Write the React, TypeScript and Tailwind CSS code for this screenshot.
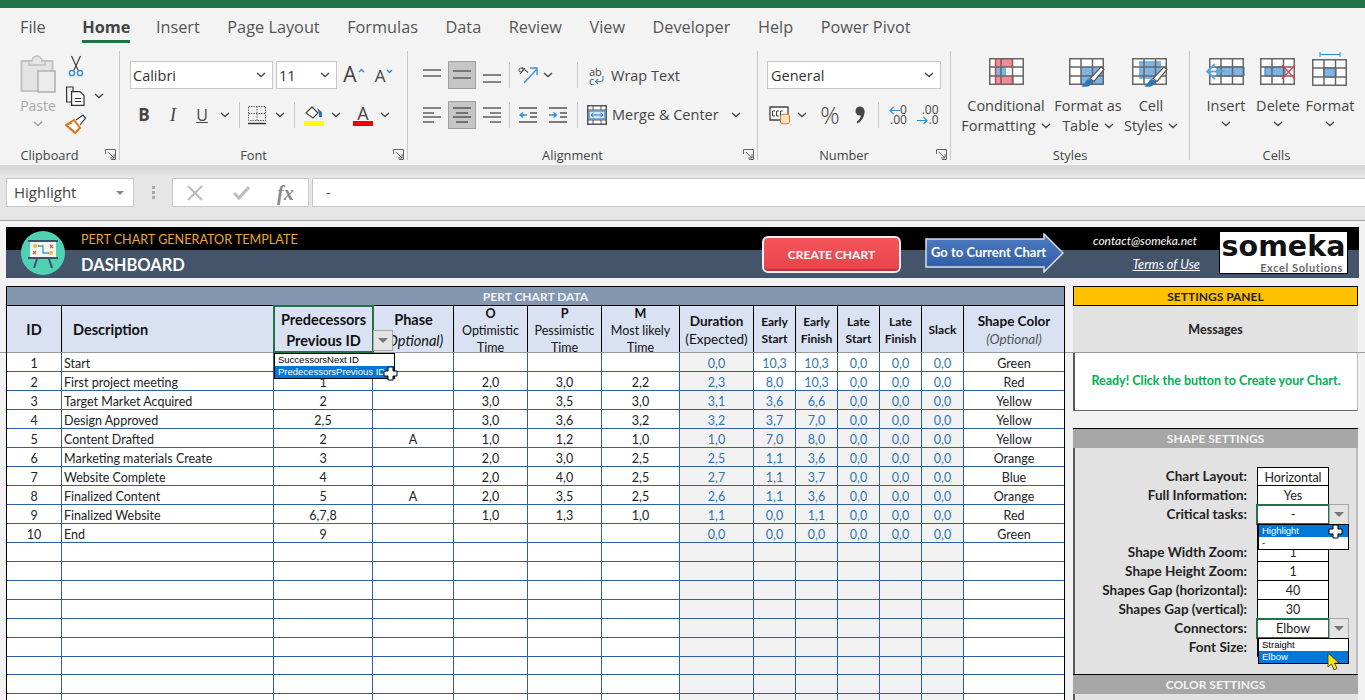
import type { ReactNode } from "react";

const TABS = ["File", "Home", "Insert", "Page Layout", "Formulas", "Data", "Review", "View", "Developer", "Help", "Power Pivot"];

type Task = {
  id: string;
  name: string;
  prev: string;
  phase: string;
  o: string;
  p: string;
  m: string;
  calc: string[];
  color: string;
};

const TASKS: Task[] = [
  { id: "1", name: "Start", prev: "", phase: "", o: "", p: "", m: "", calc: ["0,0", "10,3", "10,3", "0,0", "0,0", "0,0"], color: "Green" },
  { id: "2", name: "First project meeting", prev: "1", phase: "", o: "2,0", p: "3,0", m: "2,2", calc: ["2,3", "8,0", "10,3", "0,0", "0,0", "0,0"], color: "Red" },
  { id: "3", name: "Target Market Acquired", prev: "2", phase: "", o: "3,0", p: "3,5", m: "3,0", calc: ["3,1", "3,6", "6,6", "0,0", "0,0", "0,0"], color: "Yellow" },
  { id: "4", name: "Design Approved", prev: "2,5", phase: "", o: "3,0", p: "3,6", m: "3,2", calc: ["3,2", "3,7", "7,0", "0,0", "0,0", "0,0"], color: "Yellow" },
  { id: "5", name: "Content Drafted", prev: "2", phase: "A", o: "1,0", p: "1,2", m: "1,0", calc: ["1,0", "7,0", "8,0", "0,0", "0,0", "0,0"], color: "Yellow" },
  { id: "6", name: "Marketing materials Create", prev: "3", phase: "", o: "2,0", p: "3,0", m: "2,5", calc: ["2,5", "1,1", "3,6", "0,0", "0,0", "0,0"], color: "Orange" },
  { id: "7", name: "Website Complete", prev: "4", phase: "", o: "2,0", p: "4,0", m: "2,5", calc: ["2,7", "1,1", "3,7", "0,0", "0,0", "0,0"], color: "Blue" },
  { id: "8", name: "Finalized Content", prev: "5", phase: "A", o: "2,0", p: "3,5", m: "2,5", calc: ["2,6", "1,1", "3,6", "0,0", "0,0", "0,0"], color: "Orange" },
  { id: "9", name: "Finalized Website", prev: "6,7,8", phase: "", o: "1,0", p: "1,3", m: "1,0", calc: ["1,1", "0,0", "1,1", "0,0", "0,0", "0,0"], color: "Red" },
  { id: "10", name: "End", prev: "9", phase: "", o: "", p: "", m: "", calc: ["0,0", "0,0", "0,0", "0,0", "0,0", "0,0"], color: "Green" },
];

const EMPTY_ROWS = Array.from({ length: 9 }, (_, i) => i);
const GRID = "grid grid-cols-[55px_212px_99px_81px_74px_74px_78px_74px_42px_42px_42px_42px_42px_100px]";
const HEAD = "flex flex-col items-center justify-center border-r border-black bg-[#d9e1f2] pt-[2px] text-center text-[#111]";

function Chev({ light }: { light?: boolean }) {
  return (
    <svg width="10" height="6" viewBox="0 0 10 6" fill="none">
      <path d="M1 1l4 3.6L9 1" stroke={light ? "#9a9a9a" : "#444"} strokeWidth="1.3" />
    </svg>
  );
}

function Slot({ className, children }: { className: string; children?: ReactNode }) {
  return <div className={`flex shrink-0 items-center justify-center ${className}`}>{children}</div>;
}

function Sep() {
  return <div className="h-[26px] w-px shrink-0 bg-[#c8c8c8]" />;
}

function Launcher() {
  return (
    <svg className="absolute right-[3px] top-[-1px]" width="11" height="11" viewBox="0 0 11 11" fill="none" stroke="#666">
      <path d="M.5 5V.5h10v10H6" />
      <path d="M3 3l6 6M9 5v4H5" />
    </svg>
  );
}

function Group({ label, className, launcher, children }: { label: string; className: string; launcher?: boolean; children: ReactNode }) {
  return (
    <div className={`flex h-[109px] shrink-0 flex-col border-r border-[#c8c8c8] ${className}`}>
      <div className="h-[99px]">{children}</div>
      <div className={`relative flex h-[10px] items-center justify-center text-[12.8px] leading-[10px] text-[#444] ${launcher ? "pr-[20px]" : ""}`}>
        {label}
        {launcher && <Launcher />}
      </div>
    </div>
  );
}

function Lines({ rows, right }: { rows: [number, number][]; right?: boolean }) {
  return (
    <svg width="20" height="18" viewBox="0 0 20 18" stroke="#555" strokeWidth="1.4">
      {rows.map(([y, w]) => (
        <path key={y} d={right ? `M${19 - w} ${y}H19` : `M1 ${y}H${1 + w}`} />
      ))}
    </svg>
  );
}

function SheetGrid({ x = 1, y = 1, children }: { x?: number; y?: number; children?: ReactNode }) {
  return (
    <g transform={`translate(${x} ${y})`}>
      <rect width="35" height="27" fill="#fff" />
      {children}
      <path d="M.75.75h33.5v25.5H.75zM12 .75v25.5M23.5.75v25.5M.75 9h33.5M.75 18h33.5" fill="none" stroke="#666" strokeWidth="1.5" />
    </g>
  );
}

function Brush({ x, y }: { x: number; y: number }) {
  return (
    <g transform={`translate(${x} ${y})`}>
      <path d="M19 1l3 2.5-10 12-4-3z" fill="#fff" stroke="#555" strokeWidth="1.2" />
      <path d="M7 13c-3 .5-3.500 3.500-5 5-1 1-2 2-3 2 3 1.500 8 1 10-1.500 1-1.500 1.500-3 .8-3.700z" fill="#2e75b6" />
    </g>
  );
}

function CopyIcon() {
  return (
    <svg width="22" height="22" viewBox="0 0 22 22" fill="none" stroke="#333" strokeWidth="1.2">
      <path d="M6 17H1.600V2H8v4" />
      <path d="M6.600 6.600H15l4 4v9.800H6.600z" fill="#fff" />
      <path d="M10 13.500h6M10 16.500h6" />
    </svg>
  );
}

function PasteIcon() {
  return (
    <svg width="36" height="38" viewBox="0 0 36 38" fill="none">
      <path d="M1.500 6h31v30h-31z" fill="#e4e4e4" stroke="#c4c4c4" strokeWidth="2" />
      <path d="M12 6c0-2 2-5 5-5s5 3 5 5h3v4H9V6z" fill="#e4e4e4" stroke="#bdbdbd" strokeWidth="1.500" />
      <path d="M18 16h17v21H18z" fill="#ececec" stroke="#b0b0b0" strokeWidth="1.500" />
    </svg>
  );
}

function ScissorsIcon() {
  return (
    <svg width="16" height="22" viewBox="0 0 16 22" fill="none">
      <path d="M3.500 1l6.500 14M12.500 1L6 15" stroke="#333" strokeWidth="1.100" />
      <circle cx="4" cy="18" r="2.600" stroke="#3d8ecf" strokeWidth="1.500" />
      <circle cx="12" cy="18" r="2.600" stroke="#3d8ecf" strokeWidth="1.500" />
    </svg>
  );
}

function PainterIcon() {
  return (
    <svg width="22" height="20" viewBox="0 0 22 20" fill="none">
      <path d="M1 11l8-5 6 8-5 5z" fill="#fff" stroke="#e0761c" strokeWidth="2" />
      <path d="M11 6l7-5 2.500 3-5.500 7" fill="#fff" stroke="#333" strokeWidth="1.200" />
      <path d="M5 14l4 3M2 11l5-2" stroke="#e0761c" strokeWidth="1.200" />
    </svg>
  );
}

function Clipboard() {
  return (
    <Group label="Clipboard" className="w-[120px]" launcher>
      <div className="flex">
        <div className="ml-[18px] flex w-[40px] flex-col items-center pt-[4px]">
          <PasteIcon />
          <div className="mt-[3px] h-[20px] text-[14px] leading-[20px] text-[#a8a8a8]">Paste</div>
          <div className="mt-[5px]">
            <Chev light />
          </div>
        </div>
        <div className="ml-[5px] flex flex-col pt-[3px]">
          <Slot className="h-[24px] w-[26px]">
            <ScissorsIcon />
          </Slot>
          <div className="mt-[6px] flex items-center">
            <Slot className="h-[24px] w-[26px]">
              <CopyIcon />
            </Slot>
            <Slot className="w-[20px]">
              <Chev />
            </Slot>
          </div>
          <Slot className="mt-[4px] h-[24px] w-[26px]">
            <PainterIcon />
          </Slot>
        </div>
      </div>
    </Group>
  );
}

function Combo({ className, text }: { className: string; text: string }) {
  return (
    <div className={`flex h-[28px] shrink-0 items-center justify-between border border-[#c8c8c8] bg-white pl-[2px] pr-[6px] text-[14.5px] text-[#333] ${className}`}>
      <span className="pt-px">{text}</span>
      <Chev />
    </div>
  );
}

function SizeButton({ className, down }: { className: string; down?: boolean }) {
  return (
    <div className={`flex h-[28px] w-[24px] items-center justify-center ${down ? "pt-[2px] text-[17px]" : "text-[21px]"} text-[#444] ${className}`}>
      A
      <svg className="mb-[10px] ml-px" width="7" height="5" viewBox="0 0 7 5" fill="none" stroke="#2e8fd8" strokeWidth="1.300">
        <path d={down ? "M1 1l2.500 2.500L6 1" : "M1 4l2.500-2.500L6 4"} />
      </svg>
    </div>
  );
}

function Font() {
  return (
    <Group label="Font" className="w-[288px]" launcher>
      <div className="flex h-[38px] items-end pl-[10px]">
        <Combo className="w-[143px]" text="Calibri" />
        <Combo className="ml-[3px] w-[61px]" text="11" />
        <SizeButton className="ml-[5px]" />
        <SizeButton className="ml-[6px]" down />
      </div>
      <div className="mt-[12px] flex h-[28px] items-center pl-[10px]">
        <Slot className="w-[28px] text-[17px] font-bold text-[#444]">B</Slot>
        <Slot className="ml-px w-[28px] font-['Liberation_Serif',serif] text-[18px] italic text-[#444]">I</Slot>
        <Slot className="ml-px w-[28px] text-[16px] text-[#444] underline">U</Slot>
        <Slot className="ml-[2px] w-[14px]">
          <Chev />
        </Slot>
        <div className="ml-[7px]">
          <Sep />
        </div>
        <Slot className="ml-[3px] w-[28px]">
          <svg width="20" height="20" viewBox="0 0 20 20" fill="none" stroke="#666">
            <path d="M1.500 1.500h17v14h-17zM10 1.500v14M1.500 8.500h17" strokeDasharray="1.500 1" />
            <path d="M1 18.500h18" stroke="#333" strokeWidth="1.500" />
          </svg>
        </Slot>
        <Slot className="ml-[2px] w-[14px]">
          <Chev />
        </Slot>
        <div className="ml-[7px]">
          <Sep />
        </div>
        <Slot className="ml-[5px] w-[28px]">
          <svg width="22" height="21" viewBox="0 0 22 21" fill="none">
            <path d="M3 8l6-6 6 6-5 5z" fill="#fff" stroke="#444" strokeWidth="1.300" />
            <path d="M14 3l5 4v5h-3V8z" fill="#2e75b6" />
            <path d="M1 16h20v5H1z" fill="#ffff00" />
          </svg>
        </Slot>
        <Slot className="ml-px w-[14px]">
          <Chev />
        </Slot>
        <Slot className="ml-[6px] w-[28px]">
          <div className="flex flex-col items-center">
            <span className="text-[18px] leading-[16px] text-[#444]">A</span>
            <span className="h-[5px] w-[20px] bg-[#f00000]" />
          </div>
        </Slot>
        <Slot className="ml-px w-[14px]">
          <Chev />
        </Slot>
      </div>
    </Group>
  );
}

function Selected({ children }: { children: ReactNode }) {
  return <Slot className="h-[28px] w-[28px] border border-[#a0a0a0] bg-[#c6c6c6]">{children}</Slot>;
}

function OrientIcon() {
  return (
    <svg width="22" height="20" viewBox="0 0 22 20" fill="none">
      <path d="M7 18L20 4M13 3h7v7" stroke="#3d8ecf" strokeWidth="1.300" />
      <path d="M3 9l5-6M5 2.500l6 5" stroke="#555" strokeWidth="1.100" />
      <circle cx="4" cy="5" r="2" stroke="#555" />
    </svg>
  );
}

function IndentIcon({ inc }: { inc?: boolean }) {
  return (
    <svg width="20" height="18" viewBox="0 0 20 18" fill="none">
      <path d="M1 2h18M12 7h7M12 11h7M1 16h18" stroke="#555" strokeWidth="1.400" />
      <path d={inc ? "M1 9h7M5.500 6.500L8.500 9l-3 2.500" : "M9 9H2M5 6.500L2 9l3 2.500"} stroke="#2e8fd8" strokeWidth="1.400" />
    </svg>
  );
}

function Alignment() {
  return (
    <Group label="Alignment" className="w-[350px]" launcher>
      <div className="flex h-[38px] items-end pl-[10px]">
        <Slot className="h-[28px] w-[28px]">
          <Lines rows={[[4, 18], [10, 18]]} />
        </Slot>
        <div className="ml-[2px]">
          <Selected>
            <Lines rows={[[5, 18], [12, 18]]} />
          </Selected>
        </div>
        <Slot className="ml-[2px] h-[28px] w-[28px]">
          <Lines rows={[[9, 18], [16, 18]]} />
        </Slot>
        <div className="ml-[3px] flex h-[28px] items-center">
          <Sep />
        </div>
        <Slot className="ml-[5px] h-[28px] w-[26px]">
          <OrientIcon />
        </Slot>
        <Slot className="h-[28px] w-[14px]">
          <Chev />
        </Slot>
        <div className="ml-[22px] flex h-[28px] items-center">
          <Sep />
        </div>
        <div className="ml-[11px] flex h-[28px] items-center pt-px text-[14.5px] text-[#444]">
          <span className="mr-[4px] flex w-[18px] flex-col text-[11px] leading-[9px]">
            <span>ab</span>
            <span className="flex items-center">
              c
              <svg width="10" height="9" viewBox="0 0 10 9" fill="none" stroke="#2e8fd8" strokeWidth="1.200">
                <path d="M9 0v3.500a2 2 0 0 1-2 2H1.500M4 3L1.500 5.500 4 8" />
              </svg>
            </span>
          </span>
          Wrap Text
        </div>
      </div>
      <div className="mt-[12px] flex h-[28px] items-center pl-[10px]">
        <Slot className="w-[28px]">
          <Lines rows={[[2, 18], [7, 11], [11, 18], [16, 11]]} />
        </Slot>
        <div className="ml-[2px]">
          <Selected>
            <svg width="20" height="18" viewBox="0 0 20 18" stroke="#555" strokeWidth="1.400">
              <path d="M1 2h18M4 7h12M1 11h18M4 16h12" />
            </svg>
          </Selected>
        </div>
        <Slot className="ml-[2px] w-[28px]">
          <Lines right rows={[[2, 18], [7, 11], [11, 18], [16, 11]]} />
        </Slot>
        <div className="ml-[3px]">
          <Sep />
        </div>
        <Slot className="ml-[5px] w-[26px]">
          <IndentIcon />
        </Slot>
        <Slot className="ml-[4px] w-[26px]">
          <IndentIcon inc />
        </Slot>
        <div className="ml-[6px]">
          <Sep />
        </div>
        <div className="ml-[9px] flex items-center text-[14.5px] text-[#444]">
          <svg className="mr-[5px]" width="20" height="20" viewBox="0 0 20 20" fill="none">
            <path d="M.75.75h18.500v18.500H.75z" fill="#fff" stroke="#555" strokeWidth="1.500" />
            <path d="M1 5h18M1 15h18M6 1v4M14 1v4M6 15v4M14 15v4" stroke="#555" />
            <path d="M2 6h16v8H2z" fill="#cfe4f5" stroke="#2e75b6" />
            <path d="M4 10h12M6.500 8L4 10l2.500 2M13.500 8l2.500 2-2.500 2" stroke="#2e75b6" />
          </svg>
          Merge &amp; Center
        </div>
        <Slot className="ml-[12px] w-[10px]">
          <Chev />
        </Slot>
      </div>
    </Group>
  );
}

function Number_() {
  return (
    <Group label="Number" className="w-[193px]" launcher>
      <div className="flex h-[38px] items-end pl-[9px]">
        <Combo className="w-[174px] !pl-[3px]" text="General" />
      </div>
      <div className="mt-[12px] flex h-[28px] items-center pl-[9px]">
        <Slot className="w-[26px]">
          <svg width="22" height="20" viewBox="0 0 22 20" fill="none">
            <path d="M1 2h18v13H1z" fill="#fff" stroke="#444" strokeWidth="1.300" />
            <path d="M6 6H3.500v5H6M10 6H7.500v5H10M14 6h-2.500v5H14" stroke="#444" />
            <ellipse cx="16" cy="11" rx="4.500" ry="2" fill="#fde2c2" stroke="#e0761c" />
            <path d="M11.500 11v6c0 2.600 9 2.600 9 0v-6" fill="#fde2c2" stroke="#e0761c" />
          </svg>
        </Slot>
        <Slot className="ml-[1px] w-[16px]">
          <Chev />
        </Slot>
        <Slot className="ml-[6px] w-[28px] text-[24px] font-light leading-none text-[#444]">%</Slot>
        <Slot className="ml-[2px] w-[28px]">
          <svg width="10" height="18" viewBox="0 0 10 18" fill="#444">
            <circle cx="5" cy="5" r="4.500" />
            <path d="M9.500 5c.3 5-2.500 10-7 12.500L1.500 16c3-2 4.500-5 4.500-8z" />
          </svg>
        </Slot>
        <div className="ml-[4px]">
          <Sep />
        </div>
        <Slot className="ml-[5px] w-[28px]">
          <div className="flex flex-col items-end text-[12px] leading-[10px] text-[#444]">
            <span className="flex items-center">
              <svg width="11" height="9" viewBox="0 0 11 9" fill="none" stroke="#2e8fd8" strokeWidth="1.200">
                <path d="M11 4.500H1M4.500 1L1 4.500 4.500 8" />
              </svg>
              0
            </span>
            <span>.00</span>
          </div>
        </Slot>
        <Slot className="ml-[2px] w-[28px]">
          <div className="flex flex-col items-end text-[12px] leading-[10px] text-[#444]">
            <span>.00</span>
            <span className="flex items-center">
              <svg width="11" height="9" viewBox="0 0 11 9" fill="none" stroke="#2e8fd8" strokeWidth="1.200">
                <path d="M0 4.500h10M6.500 1L10 4.500 6.500 8" />
              </svg>
              .0
            </span>
          </div>
        </Slot>
      </div>
    </Group>
  );
}

function BigButton({ className, icon, lines, chevAfter }: { className: string; icon: ReactNode; lines: string[]; chevAfter?: boolean }) {
  return (
    <div className={`flex shrink-0 flex-col items-center pt-[6px] ${className}`}>
      <div className="h-[32px]">{icon}</div>
      <div className="mt-[7px] flex flex-col items-center whitespace-nowrap text-[14.5px] leading-[20px] text-[#444]">
        {lines.map((l, i) => (
          <div key={l} className="flex h-[20px] items-center">
            {l}
            {chevAfter && i === lines.length - 1 && (
              <span className="ml-[5px]">
                <Chev />
              </span>
            )}
          </div>
        ))}
      </div>
      {!chevAfter && (
        <div className="mt-[5px]">
          <Chev />
        </div>
      )}
    </div>
  );
}

function Styles() {
  return (
    <Group label="Styles" className="w-[239px]">
      <div className="flex">
        <BigButton
          className="ml-[9px] w-[92px]"
          chevAfter
          lines={["Conditional", "Formatting"]}
          icon={
            <svg width="37" height="30" viewBox="0 0 37 30">
              <SheetGrid x={1} y={1}>
                <path d="M7 0h16v9H7zM7 18h18v9H7z" fill="#f48a92" />
                <path d="M7 9h10v9H7z" fill="#7db4e6" />
              </SheetGrid>
              <path d="M7.500 1v27" stroke="#e0323c" strokeWidth="1.200" />
            </svg>
          }
        />
        <BigButton
          className="ml-[2px] w-[68px]"
          chevAfter
          lines={["Format as", "Table"]}
          icon={
            <svg width="40" height="32" viewBox="0 0 40 32">
              <SheetGrid x={1} y={1}>
                <path d="M12 9h23v18H12z" fill="#7db4e6" />
              </SheetGrid>
              <Brush x={14} y={9} />
            </svg>
          }
        />
        <BigButton
          className="ml-[1px] w-[56px]"
          chevAfter
          lines={["Cell", "Styles"]}
          icon={
            <svg width="40" height="32" viewBox="0 0 40 32">
              <SheetGrid x={1} y={1}>
                <path d="M7 3h22v18H7z" fill="#7db4e6" />
              </SheetGrid>
              <Brush x={14} y={9} />
            </svg>
          }
        />
      </div>
    </Group>
  );
}

function Cells() {
  return (
    <div className="flex h-[109px] w-[175px] shrink-0 flex-col">
      <div className="flex h-[99px]">
        <BigButton
          className="ml-[14px] w-[44px]"
          lines={["Insert"]}
          icon={
            <svg width="42" height="30" viewBox="0 0 42 30" fill="none">
              <SheetGrid x={4} y={1}>
                <path d="M8 9h27v9H8z" fill="#7db4e6" stroke="#2e75b6" />
              </SheetGrid>
              <path d="M20 14.500H3M10 7l-8 7.500L10 22" stroke="#5aa5e0" strokeWidth="1.800" />
            </svg>
          }
        />
        <BigButton
          className="ml-[6px] w-[48px]"
          lines={["Delete"]}
          icon={
            <svg width="40" height="30" viewBox="0 0 40 30" fill="none">
              <SheetGrid x={2} y={1}>
                <path d="M5 9h20v9H5z" fill="#7db4e6" stroke="#2e75b6" />
              </SheetGrid>
              <path d="M24 8l13 14M37 8L24 22" stroke="#e0484f" strokeWidth="1.600" />
            </svg>
          }
        />
        <BigButton
          className="ml-[3px] w-[50px]"
          lines={["Format"]}
          icon={
            <svg className="-mt-[5px]" width="38" height="36" viewBox="0 0 38 36" fill="none">
              <path d="M9 2.500h20M9 0v5M29 0v5" stroke="#2e8fd8" />
              <SheetGrid x={1} y={7}>
                <path d="M12 9h12v9H12z" fill="#7db4e6" stroke="#2e75b6" />
              </SheetGrid>
            </svg>
          }
        />
      </div>
      <div className="flex h-[10px] items-center justify-center pr-[2px] text-[12.8px] leading-[10px] text-[#444]">Cells</div>
    </div>
  );
}

function Ribbon() {
  return (
    <div className="h-[157px] bg-[#f3f3f3] font-['Open_Sans',sans-serif]">
      <div className="flex h-[43px] items-start gap-[27.5px] pl-[20px]">
        {TABS.map((t) => (
          <div
            key={t}
            className={`flex h-[35px] items-center border-b-[3px] pt-[6px] text-[16.3px] ${t === "Home" ? "-mr-[2px] ml-[9px] border-[#217346] font-bold text-[#444]" : "border-transparent text-[#555]"}`}
          >
            {t}
          </div>
        ))}
      </div>
      <div className="flex">
        <Clipboard />
        <Font />
        <Alignment />
        <Number_ />
        <Styles />
        <Cells />
      </div>
    </div>
  );
}

function FormulaBar() {
  return (
    <div className="h-[55px] bg-[linear-gradient(#d6d6d6,#e6e6e6_12px)] px-[6px] pt-[13px] font-['Open_Sans',sans-serif]">
      <div className="flex h-[29px]">
        <div className="flex w-[128px] items-center justify-between border border-[#c8c8c8] bg-white pl-[7px] pr-[9px] text-[15px] text-[#444]">
          Highlight
          <span className="h-0 w-0 border-x-[4px] border-t-[4px] border-x-transparent border-t-[#888]" />
        </div>
        <div className="flex w-[38px] flex-col items-center justify-center gap-[2px]">
          <span className="h-[3px] w-[3px] bg-[#aaa]" />
          <span className="h-[3px] w-[3px] bg-[#aaa]" />
          <span className="h-[3px] w-[3px] bg-[#aaa]" />
        </div>
        <div className="flex w-[137px] items-center border border-[#c8c8c8] bg-white pl-[14px]">
          <svg width="16" height="16" viewBox="0 0 16 16" fill="none" stroke="#bbb" strokeWidth="2">
            <path d="M1 1l14 14M15 1L1 15" />
          </svg>
          <svg className="ml-[30px]" width="17" height="14" viewBox="0 0 17 14" fill="none" stroke="#bbb" strokeWidth="3">
            <path d="M1 7l5 5L16 1" />
          </svg>
          <span className="ml-[27px] font-['Liberation_Serif',serif] text-[20px] font-bold italic text-[#888]">fx</span>
        </div>
        <div className="ml-[3px] -mr-[6px] flex flex-1 items-center border border-r-0 border-[#c8c8c8] bg-white pl-[13px] text-[14px] text-[#444]">-</div>
      </div>
    </div>
  );
}

function SomekaBand() {
  return (
    <div className="flex h-[51px] items-center bg-[linear-gradient(#000_23px,#44546a_23px)]">
      <div className="ml-[15px] flex h-[44px] w-[44px] items-center justify-center rounded-full bg-[#4fd2b4]">
        <svg width="32" height="30" viewBox="0 0 32 30" fill="none">
          <path d="M1 3h30" stroke="#3f5168" strokeWidth="2" />
          <path d="M3 4h26v16H3z" fill="#f4f4ee" />
          <path d="M1 20h30" stroke="#3f5168" strokeWidth="2" />
          <path d="M10 21L7 30M22 21l3 9" stroke="#3f5168" strokeWidth="2" />
          <circle cx="8" cy="8" r="2" fill="#f2b33d" />
          <circle cx="24" cy="15" r="2" fill="#f2b33d" />
          <path d="M6 13l3 3M9 13l-3 3M23 7l3 3M26 7l-3 3" stroke="#e2574c" strokeWidth="1.300" />
          <path d="M11 8h5v7h6" stroke="#4a90d9" strokeWidth="1.300" />
        </svg>
      </div>
      <div className="ml-[16px] flex h-full w-[681px] flex-col">
        <div className="flex h-[23px] items-center pt-[3px] text-[12.6px] text-[#eaa92c]">PERT CHART GENERATOR TEMPLATE</div>
        <div className="flex h-[28px] items-center pt-[2px] text-[16.5px] font-bold text-white">DASHBOARD</div>
      </div>
      <div className="mt-[4px] flex h-[37px] w-[139px] shrink-0 items-center justify-center rounded-[6px] border-2 border-[#eef0f2] bg-[linear-gradient(#f4565c,#e8444a)] text-[12px] font-bold text-white shadow-[inset_0_-2px_0_#b8333a]">
        CREATE CHART
      </div>
      <div className="relative ml-[24px] flex h-[40px] w-[139px] shrink-0 items-center pl-[6px] text-[13px] font-bold text-white">
        <svg className="absolute inset-0" width="139" height="40" viewBox="0 0 139 40">
          <defs>
            <linearGradient id="goto" x1="0" y1="0" x2="0" y2="1">
              <stop offset="0" stopColor="#4f7fc4" />
              <stop offset="1" stopColor="#2d57a0" />
            </linearGradient>
          </defs>
          <path d="M1 6H119V1L138 20 119 39V34H1Z" fill="url(#goto)" stroke="#d8dee8" strokeWidth="1.500" />
        </svg>
        <span className="relative whitespace-nowrap">Go to Current Chart</span>
      </div>
      <div className="ml-[26px] flex h-full w-[110px] shrink-0 flex-col items-end italic text-white">
        <div className="flex h-[27px] items-center pr-[3px] text-[12px]">contact@someka.net</div>
        <div className="flex h-[22px] items-center text-[12.8px] underline">Terms of Use</div>
      </div>
      <div className="ml-[19px] flex h-[43px] w-[129px] shrink-0 flex-col items-center border border-black bg-white">
        <div className="font-['DejaVu_Sans',sans-serif] text-[28.5px] font-bold leading-[29px] text-[#111]">someka</div>
        <div className="w-full pr-[4px] text-right text-[11px] font-bold leading-[13px] tracking-[0.6px] text-[#666]">Excel Solutions</div>
      </div>
    </div>
  );
}

function ArrowButton({ className }: { className: string }) {
  return (
    <div className={`absolute flex h-[21px] w-[20px] items-center justify-center border border-[#a8a8a8] bg-[#e4e4e4] ${className}`}>
      <span className="h-0 w-0 border-x-[5px] border-t-[5px] border-x-transparent border-t-[#777]" />
    </div>
  );
}

function CrossCursor({ className }: { className: string }) {
  return (
    <svg className={`absolute ${className}`} width="15" height="15" viewBox="0 0 15 15">
      <path d="M5 1h5v4h4v5h-4v4H5v-4H1V5h4z" fill="#fff" stroke="#000" />
    </svg>
  );
}

function ListBox({ className, items, active }: { className: string; items: string[]; active: string }) {
  return (
    <div className={`absolute z-10 border border-black bg-white text-left font-['Liberation_Sans',sans-serif] text-[9.500px] font-normal leading-[12px] text-black ${className}`}>
      {items.map((item) => (
        <div key={item} className={`h-[12px] whitespace-nowrap pl-[3px] ${item === active ? "bg-[#0078d7] text-white" : ""}`}>
          {item}
        </div>
      ))}
    </div>
  );
}

function DataTable() {
  return (
    <div className="w-[1059px] shrink-0 border-x border-black text-[12.5px] text-[#222]">
      <div className="flex h-[20px] items-center justify-center border-y border-black bg-[#8497b0] pt-px text-[12px] font-bold text-[#eef1f6]">PERT CHART DATA</div>
      <div className={`${GRID} h-[47px] grid-rows-[46px] border-b border-[#9a9a9a] font-bold`}>
        <div className={`${HEAD} text-[14.500px]`}>ID</div>
        <div className={`${HEAD} !items-start pl-[11px] text-[14.500px]`}>Description</div>
        <div className={`${HEAD} relative !border-r-0 text-[14.500px] leading-[21px] outline-2 -outline-offset-1 outline-[#217346]`}>
          <div>Predecessors</div>
          <div>Previous ID</div>
          <ArrowButton className="left-[99px] top-[24px] z-10" />
          <ListBox className="left-0 top-[47px] w-[121px]" items={["SuccessorsNext ID", "PredecessorsPrevious ID"]} active="PredecessorsPrevious ID" />
          <CrossCursor className="left-[109px] top-[60px] z-20" />
        </div>
        <div className={`${HEAD} border-l border-l-transparent text-[14.500px] leading-[21px]`}>
          <div>Phase</div>
          <div className="font-normal italic">(Optional)</div>
        </div>
        {[
          ["O", "Optimistic", "Time"],
          ["P", "Pessimistic", "Time"],
          ["M", "Most likely", "Time"],
        ].map(([a, b, c]) => (
          <div key={a} className={`${HEAD} text-[12.500px] font-normal leading-[17px]`}>
            <div className="font-bold">{a}</div>
            <div>{b}</div>
            <div>{c}</div>
          </div>
        ))}
        <div className={`${HEAD} text-[13.500px] leading-[18px]`}>
          <div>Duration</div>
          <div className="font-normal">(Expected)</div>
        </div>
        {[
          ["Early", "Start"],
          ["Early", "Finish"],
          ["Late", "Start"],
          ["Late", "Finish"],
        ].map(([a, b]) => (
          <div key={a + b} className={`${HEAD} text-[12px] leading-[17px]`}>
            <div>{a}</div>
            <div>{b}</div>
          </div>
        ))}
        <div className={`${HEAD} text-[12px]`}>Slack</div>
        <div className={`${HEAD} !border-r-0 text-[13.500px] leading-[18px]`}>
          <div>Shape Color</div>
          <div className="font-normal italic text-[#555]">(Optional)</div>
        </div>
      </div>
      {TASKS.map((t, i) => (
        <div key={t.id} className={`${GRID} h-[19px] grid-rows-[18px] border-b border-[#2f5fa8] bg-white leading-[21px]`}>
          <div className="border-r border-[#2f5fa8] text-center">{t.id}</div>
          <div className="border-r border-[#2f5fa8] pl-[2px]">{t.name}</div>
          <div className="border-r border-[#2f5fa8] text-center">{t.prev}</div>
          <div className="border-r border-[#2f5fa8] text-center">{t.phase}</div>
          <div className="border-r border-[#2f5fa8] text-center">{t.o}</div>
          <div className="border-r border-[#2f5fa8] text-center">{t.p}</div>
          <div className="border-r border-[#2f5fa8] text-center">{t.m}</div>
          {t.calc.map((v, j) => (
            <div
              key={j}
              className={`border-r border-[#2f5fa8] text-center text-[#2e75b6] ${j === 0 || i > 1 ? "bg-[#f2f2f2]" : ""}`}
            >
              {v}
            </div>
          ))}
          <div className="text-center">{t.color}</div>
        </div>
      ))}
      {EMPTY_ROWS.map((r) => (
        <div key={r} className={`${GRID} border-b border-[#2f5fa8] bg-white ${r === 6 ? "h-[18px]" : "h-[19px]"}`}>
          {Array.from({ length: 13 }, (_, j) => (
            <div key={j} className={`border-r border-[#2f5fa8] ${j >= 7 ? "bg-[#f2f2f2]" : ""}`} />
          ))}
          <div />
        </div>
      ))}
    </div>
  );
}

function SettingRow({ label, value, active, first, children }: { label: string; value?: string; active?: boolean; first?: boolean; children?: ReactNode }) {
  return (
    <div className="flex h-[19px]">
      <div className="w-[172px] whitespace-nowrap text-right text-[13.5px] font-bold leading-[19px] text-[#222]">{label}</div>
      <div
        className={`relative ml-[10px] w-[72px] border-x border-b border-black bg-white text-center leading-[19px] text-[#222] ${first ? "border-t" : ""} ${active ? "outline-2 -outline-offset-1 outline-[#217346]" : ""}`}
      >
        {value}
        {children}
      </div>
    </div>
  );
}

function SettingsPanel() {
  return (
    <div className="w-[285px] shrink-0 text-[12.5px] text-[#222]">
      <div className="flex h-[20px] items-center justify-center border border-black bg-[#ffc000] pt-px text-[12px] font-bold">SETTINGS PANEL</div>
      <div className="flex h-[47px] items-center justify-center border-b border-[#9a9a9a] bg-[#e2e2e2] pt-[2px] font-bold">Messages</div>
      <div className="flex h-[58px] items-center justify-center border-b border-l-2 border-r border-b-[#666] border-l-[#595959] border-r-[#bbb] bg-white font-bold text-[#00b050]">
        Ready! Click the button to Create your Chart.
      </div>
      <div className="mt-[17px] flex h-[20px] items-center justify-center border-t border-black bg-[#a6a6a6] text-[12px] font-bold text-[#f4f4f4]">SHAPE SETTINGS</div>
      <div className="h-[226px] border-x-2 border-l-[#595959] border-r-[#bbb] bg-[#e2e2e2] pt-[19px]">
        <SettingRow first label="Chart Layout:" value="Horizontal" />
        <SettingRow label="Full Information:" value="Yes" />
        <SettingRow active label="Critical tasks:" value="-">
          <ArrowButton className="left-[71px] -top-px" />
          <ListBox className="left-0 top-[19px] z-10 w-[91px]" items={["Highlight", "-"]} active="Highlight" />
          <CrossCursor className="left-[70px] top-[19px] z-20" />
        </SettingRow>
        <SettingRow label="" />
        <SettingRow label="Shape Width Zoom:" value="1" />
        <SettingRow label="Shape Height Zoom:" value="1" />
        <SettingRow label="Shapes Gap (horizontal):" value="40" />
        <SettingRow label="Shapes Gap (vertical):" value="30" />
        <SettingRow active label="Connectors:" value="Elbow">
          <ArrowButton className="left-[71px] -top-px" />
          <ListBox className="left-0 top-[19px] z-10 w-[91px]" items={["Straight", "Elbow"]} active="Elbow" />
          <svg className="absolute left-[69px] top-[33px] z-20" width="14" height="20" viewBox="0 0 14 20">
            <path d="M1 1v14l3.500-3 2.500 6 3-1.500-2.500-5.500H12z" fill="#ffe800" stroke="#333" strokeWidth=".8" />
          </svg>
        </SettingRow>
        <SettingRow label="Font Size:" />
      </div>
      <div className="flex h-[20px] items-center justify-center border-t border-black bg-[#a6a6a6] text-[12px] font-bold text-[#f4f4f4]">COLOR SETTINGS</div>
      <div className="h-[20px] border-l-2 border-l-[#595959] bg-[#e2e2e2]" />
    </div>
  );
}

function Gutter({ className }: { className: string }) {
  return (
    <div className={`shrink-0 pt-[66px] ${className}`}>
      <div className="h-px bg-[#9a9a9a]" />
    </div>
  );
}

export default function App() {
  return (
    <div className="h-[700px] w-[1365px] overflow-hidden bg-[#f2f2f2]">
      <div className="h-[8px] bg-[#217346]" />
      <Ribbon />
      <FormulaBar />
      <div className="border-t border-[#a6a6a6] px-[6px] pt-[6px] font-[Lato,sans-serif]">
        <SomekaBand />
      </div>
      <div className="mt-[8px] flex font-[Lato,sans-serif]">
        <Gutter className="w-[6px]" />
        <DataTable />
        <Gutter className="w-[8px]" />
        <SettingsPanel />
        <Gutter className="w-[7px]" />
      </div>
    </div>
  );
}
